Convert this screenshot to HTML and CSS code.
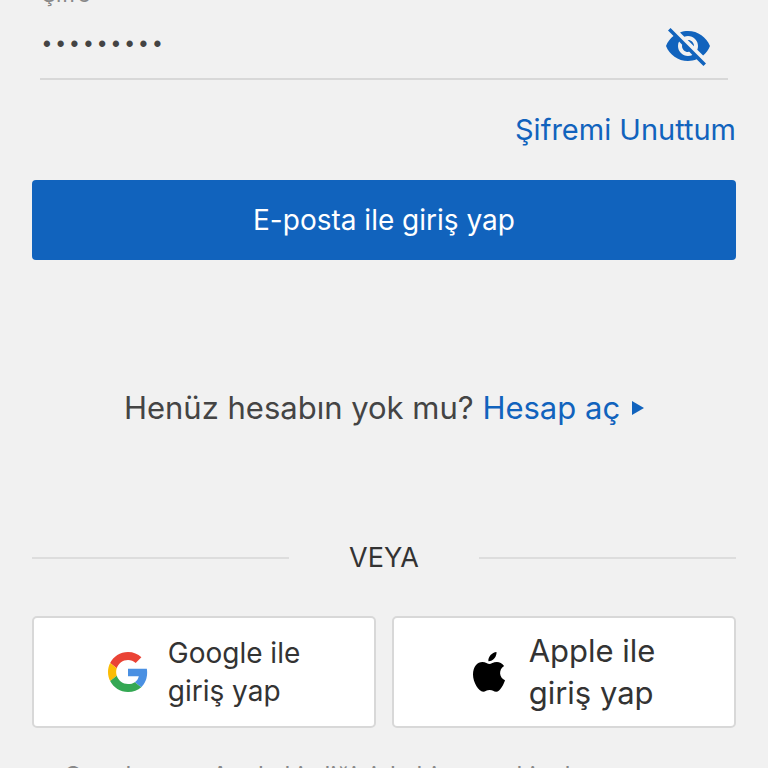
FILE: index.html
```html
<!DOCTYPE html>
<html lang="tr">
<head>
    <meta charset="UTF-8">
    <meta name="viewport" content="width=device-width, initial-scale=1.0">
    <title>Giriş Yap</title>
    <link rel="stylesheet" href="styles.css">
</head>
<body>
    <main class="login">
        <form class="login-form">
            <div class="field">
                <label for="password">Şifre</label>
                <div class="password-row">
                    <input type="password" id="password" value="sifre1234">
                    <button type="button" class="toggle-password" aria-label="Şifreyi göster">
                        <svg viewBox="0 0 24 24" width="48" height="48" fill="#1163bd">
                            <path d="M12 7c2.76 0 5 2.24 5 5 0 .65-.13 1.26-.36 1.83l2.92 2.92c1.51-1.26 2.7-2.89 3.43-4.75-1.73-4.39-6-7.5-11-7.5-1.4 0-2.74.25-3.98.7l2.16 2.16C10.74 7.13 11.35 7 12 7zM2 4.27l2.28 2.28.46.46C3.08 8.3 1.78 10.02 1 12c1.73 4.39 6 7.5 11 7.5 1.55 0 3.03-.3 4.38-.84l.42.42L19.73 22 21 20.73 3.27 3 2 4.27zM7.53 9.8l1.55 1.55c-.05.21-.08.43-.08.65 0 1.66 1.34 3 3 3 .22 0 .44-.03.65-.08l1.55 1.55c-.67.33-1.41.53-2.2.53-2.76 0-5-2.24-5-5 0-.79.2-1.53.53-2.2zm4.31-.78l3.15 3.15.02-.16c0-1.66-1.34-3-3-3l-.17.01z"/>
                        </svg>
                    </button>
                </div>
            </div>
            <a href="#" class="forgot">Şifremi Unuttum</a>
            <button type="submit" class="submit">E-posta ile giriş yap</button>
        </form>

        <p class="signup">Henüz hesabın yok mu?
            <a href="#">Hesap aç<svg class="arrow" viewBox="0 0 12 14" width="12" height="14" fill="#1163bd"><path d="M0 0l12 7-12 7z"/></svg></a>
        </p>

        <div class="divider"><span>VEYA</span></div>

        <div class="social">
            <button type="button" class="social-button google">
                <svg viewBox="0 0 48 48" width="40" height="40">
                    <path fill="#ea4335" d="M24 9.5c3.54 0 6.71 1.22 9.21 3.6l6.85-6.85C35.9 2.38 30.47 0 24 0 14.62 0 6.51 5.38 2.56 13.22l7.98 6.19C12.43 13.72 17.74 9.5 24 9.5z"/>
                    <path fill="#4a90e2" d="M46.98 24.55c0-1.57-.15-3.09-.38-4.55H24v9.02h12.94c-.58 2.96-2.26 5.48-4.78 7.18l7.73 6c4.51-4.18 7.09-10.36 7.09-17.65z"/>
                    <path fill="#fbbc05" d="M10.53 28.59c-.48-1.45-.76-2.99-.76-4.59s.27-3.14.76-4.59l-7.98-6.19C.92 16.46 0 20.12 0 24c0 3.88.92 7.54 2.56 10.78l7.97-6.19z"/>
                    <path fill="#34a853" d="M24 48c6.48 0 11.93-2.13 15.89-5.81l-7.73-6c-2.15 1.45-4.92 2.3-8.16 2.3-6.26 0-11.57-4.22-13.47-9.91l-7.98 6.19C6.51 42.62 14.62 48 24 48z"/>
                </svg>
                <span>Google ile<br>giriş yap</span>
            </button>
            <button type="button" class="social-button apple">
                <svg viewBox="0 0 32 40" width="32" height="40">
                    <path d="M23.500 0c.4 4.600-3.300 9.300-8.100 9.200C15 4.700 19 .4 23.500 0zM16.400 12c1.500 0 4-2.100 7.500-2.100 2.600 0 5.300 1.300 7.200 4-5.800 3.500-5.100 11.800.9 14.300-1.100 3.400-4.800 11.500-8.800 11.500-2.600 0-3.500-1.700-6.500-1.700-3.100 0-4.200 1.700-6.500 1.700C5.600 39.700 0 30.300 0 22.500 0 14.500 4.500 10 9.400 10c3.100 0 5.400 2 7 2z"/>
                </svg>
                <span>Apple ile<br>giriş yap</span>
            </button>
        </div>

        <p class="note">Google veya Apple kimliğinizle bir sonraki adıma</p>
    </main>
</body>
</html>
```

FILE: styles.css
```css
body {
    margin: 0;
    background-color: #f1f1f1;
    color: #444;
    font-family: Inter, "Noto Sans", sans-serif;
    height: 100vh;
    overflow: hidden;
}
button, input {
    font-family: inherit;
}
a {
    color: #1163bd;
    text-decoration: none;
}
.login {
    padding: 0 32px;
    /* Page is scrolled down to the password field */
    margin-top: -18px;
}
.login-form {
    display: flex;
    flex-direction: column;
}
.field {
    margin: 0 8px;
    border-bottom: 2px solid #d8d8d8;
}
.field label {
    display: block;
    padding-left: 2px;
    font-size: 22px;
    line-height: 24px;
    color: #888;
}
.password-row {
    display: flex;
    align-items: center;
    box-sizing: border-box;
    height: 72px;
    padding: 8px 16px 0 0;
}
.password-row input {
    flex: 1;
    min-width: 0;
    padding: 0;
    border: none;
    outline: none;
    background: transparent;
    color: #444;
    font-family: "Liberation Mono", monospace;
    font-size: 23px;
}
.toggle-password {
    display: flex;
    padding: 0;
    border: none;
    background: none;
    cursor: pointer;
}
.forgot {
    align-self: flex-end;
    margin-top: 32px;
    font-size: 29px;
    line-height: 36px;
}
.submit {
    margin-top: 32px;
    height: 80px;
    border: none;
    border-radius: 4px;
    background-color: #1163bd;
    color: #fff;
    font-size: 28px;
    cursor: pointer;
}
.signup {
    margin: 128px 0 0;
    font-size: 31px;
    line-height: 40px;
    text-align: center;
}
.arrow {
    margin-left: 12px;
    vertical-align: 4px;
}
.divider {
    display: flex;
    align-items: center;
    margin-top: 112px;
    color: #333;
    font-size: 27px;
    line-height: 36px;
}
.divider::before, .divider::after {
    content: "";
    flex: 1;
    height: 2px;
    background-color: #ddd;
}
.divider span {
    padding: 0 60px;
}
.social {
    display: grid;
    grid-template-columns: 1fr 1fr;
    gap: 16px;
    margin-top: 40px;
}
.social-button {
    display: flex;
    align-items: center;
    justify-content: center;
    gap: 20px;
    height: 112px;
    padding: 0;
    border: 2px solid #d8d8d8;
    border-radius: 5px;
    background-color: #fff;
    color: #333;
    text-align: left;
    cursor: pointer;
}
.google {
    font-size: 28px;
    line-height: 38px;
}
.apple {
    gap: 24px;
    font-size: 31px;
    line-height: 42px;
}
.note {
    margin: 32px 32px 0;
    color: #888;
    font-size: 24px;
    line-height: 32px;
}
```
